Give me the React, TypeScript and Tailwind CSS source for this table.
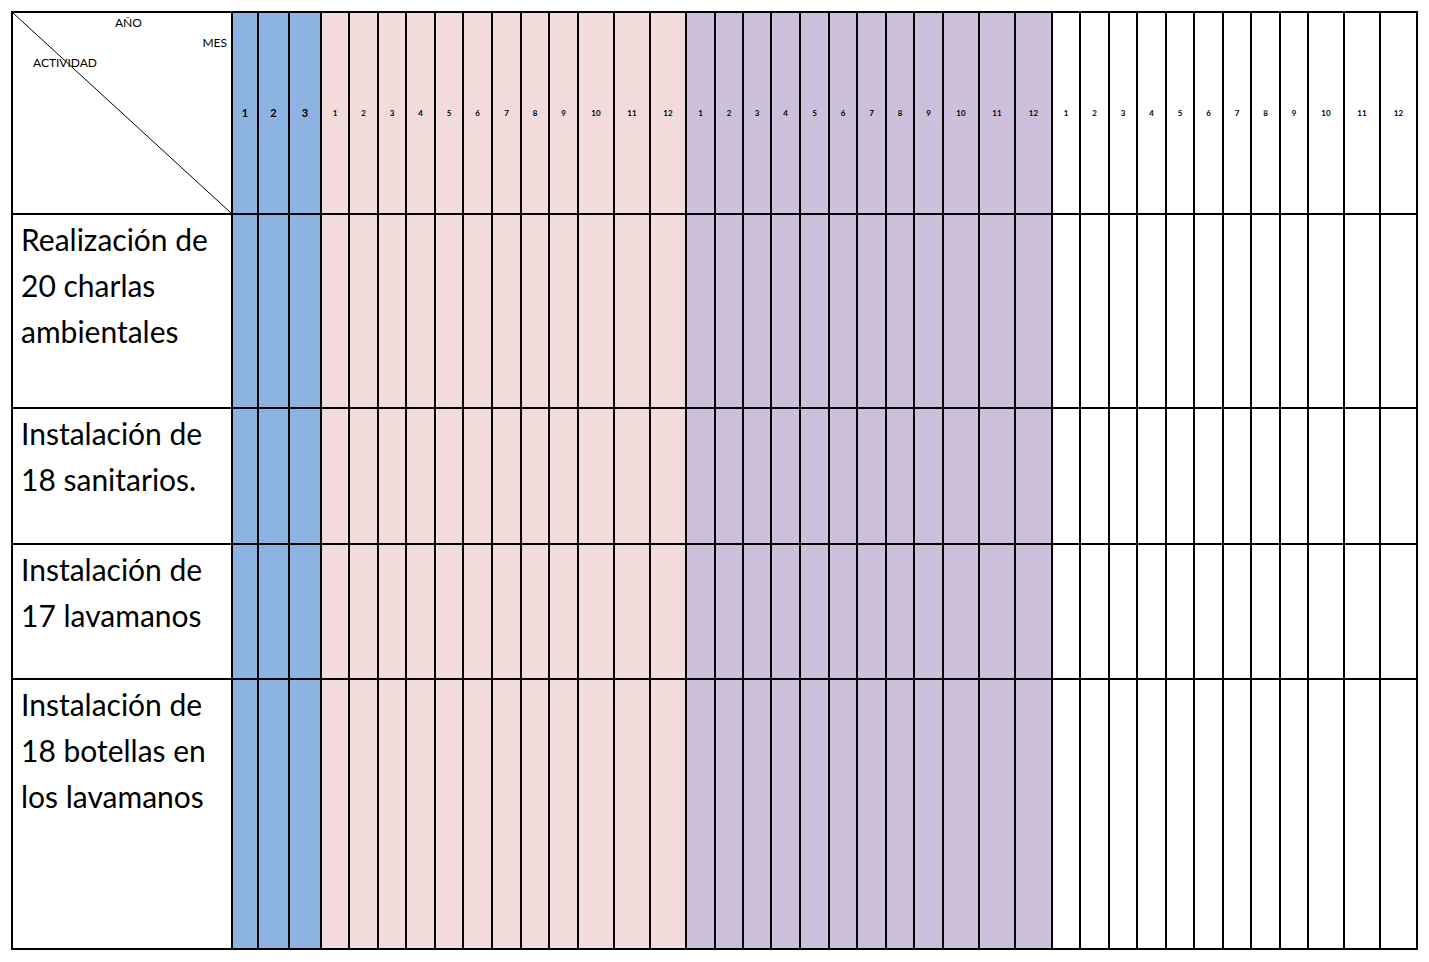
import React from "react";

const colWidths = [24, 29, 30, 26, 27, 26, 27, 26, 27, 27, 26, 27, 34, 34, 34, 27, 26, 26, 27, 27, 26, 27, 26, 27, 34, 34, 35, 26, 27, 26, 27, 26, 27, 26, 27, 26, 34, 34, 35];

const template = "218px " + colWidths.map((w) => w + "px").join(" ");

type Col = { label: string; bg: string; big: boolean };
const cols: Col[] = [];
for (let i = 1; i <= 3; i++) cols.push({ label: String(i), bg: "bg-[#8db3e2]", big: true });
for (let i = 1; i <= 12; i++) cols.push({ label: String(i), bg: "bg-[#f2dcdb]", big: false });
for (let i = 1; i <= 12; i++) cols.push({ label: String(i), bg: "bg-[#ccc0da]", big: false });
for (let i = 1; i <= 12; i++) cols.push({ label: String(i), bg: "bg-white", big: false });

const rows = [
  { h: "h-[192px]", lines: ["Realización de", "20 charlas", "ambientales"] },
  { h: "h-[134px]", lines: ["Instalación de", "18 sanitarios."] },
  { h: "h-[133px]", lines: ["Instalación de", "17 lavamanos"] },
  { h: "h-[268px]", lines: ["Instalación de", "18 botellas en", "los lavamanos"] },
];

export default function App() {
  return (
    <div className="w-[1429px] h-[962px] bg-white pt-[11px] pl-[11px]" style={{ fontFamily: "Lato, 'Open Sans', sans-serif" }}>
      <div
        className="grid gap-[2px] bg-black p-[2px] w-[1407px]"
        style={{ gridTemplateColumns: template }}
      >
        <div className="relative h-[200px] bg-white text-[12px] leading-[20px] text-black flex flex-col">
          <svg className="absolute inset-0" width="218" height="200" viewBox="0 0 218 200">
            <line x1="0" y1="0" x2="218" y2="200" stroke="#000" strokeWidth="1" />
          </svg>
          <span className="relative pl-[102px]">AÑO</span>
          <span className="relative self-end pr-[4px]">MES</span>
          <span className="relative pl-[20px]">ACTIVIDAD</span>
        </div>
        {cols.map((c, i) => (
          <div
            key={"h" + i}
            className={`h-[200px] ${c.bg} flex items-center justify-center font-bold text-black ${c.big ? "text-[11px]" : "text-[8px]"}`}
          >
            {c.label}
          </div>
        ))}
        {rows.map((r, ri) => (
          <React.Fragment key={ri}>
            <div className={`${r.h} bg-white pl-[8px] pt-[1px] text-[30px] leading-[46px] text-black`}>
              {r.lines.map((l, li) => (
                <div key={li} className="whitespace-nowrap">{l}</div>
              ))}
            </div>
            {cols.map((c, i) => (
              <div key={ri + "-" + i} className={`${r.h} ${c.bg}`} />
            ))}
          </React.Fragment>
        ))}
      </div>
    </div>
  );
}
